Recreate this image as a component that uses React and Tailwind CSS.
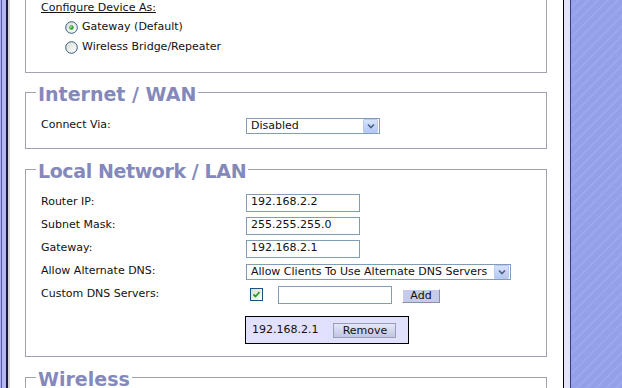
import React from 'react';

function Radio({ checked }) {
  return (
    <svg width="13" height="13" viewBox="0 0 13 13" className="shrink-0">
      <defs>
        <linearGradient id={checked ? 'rg1' : 'rg0'} x1="0" y1="0" x2="1" y2="1">
          <stop offset="0" stopColor="#dcdcd4" />
          <stop offset="1" stopColor="#ffffff" />
        </linearGradient>
      </defs>
      <circle cx="6.5" cy="6.5" r="5.8" fill={`url(#${checked ? 'rg1' : 'rg0'})`} stroke="#2f5a86" strokeWidth="1" />
      {checked && <circle cx="6.5" cy="6.5" r="2.2" fill="#2fa32f" />}
      {checked && <circle cx="6" cy="6" r="0.9" fill="#9ee89e" />}
    </svg>
  );
}

function Checkbox() {
  return (
    <div className="flex h-[13px] w-[13px] shrink-0 items-center justify-center border border-[#1c5180] bg-gradient-to-br from-[#dcdcd7] to-white">
      <svg width="9" height="9" viewBox="0 0 9 9">
        <path d="M1.5 4.5 L3.5 6.5 L7.5 2" fill="none" stroke="#21a121" strokeWidth="1.8" />
      </svg>
    </div>
  );
}

function Select({ value, width }) {
  return (
    <div className={`flex h-[16px] items-center border border-[#7f9db9] bg-white pl-[4px] pr-px ${width}`}>
      <span className="leading-[14px]">{value}</span>
      <div className="ml-auto flex h-[14px] w-[15px] items-center justify-center rounded-[1px] border border-[#b9cbf3] bg-gradient-to-b from-[#d6e3fd] to-[#b4c8f6]">
        <svg width="8" height="6" viewBox="0 0 8 6">
          <path d="M1 1.5 L4 4.5 L7 1.5" fill="none" stroke="#4d6185" strokeWidth="1.6" />
        </svg>
      </div>
    </div>
  );
}

function TextInput({ value, width = 'w-[114px]' }) {
  return (
    <div className={`flex h-[18px] items-center border border-[#7f9db9] bg-white px-[4px] ${width}`}>
      {value}
    </div>
  );
}

function Row({ label, children }) {
  return (
    <div className="flex h-[23px] items-center">
      <div className="w-[205px] shrink-0">{label}</div>
      {children}
    </div>
  );
}

function Section({ title, className = '', legendClass = '', children }) {
  return (
    <fieldset className={`border border-[#a2a2b2] px-[15px] ${className}`}>
      <legend className={`-ml-[5px] px-[2px] pt-[3px] text-[19px] font-bold leading-[22px] text-[#8489bb] ${legendClass}`}>
        {title}
      </legend>
      {children}
    </fieldset>
  );
}

export default function App() {
  return (
    <div className="flex h-[388px] w-[622px] overflow-hidden bg-white font-['DejaVu_Sans',sans-serif] text-[11px] text-[#111]">
      <div className="flex shrink-0">
        <div className="w-px bg-[#a9b0ef]" />
        <div className="w-px bg-[#5a5aa8]" />
        <div className="w-[4px] bg-[#b4b8ee]" />
        <div className="w-[2px] bg-[#1a1a40]" />
        <div className="w-[2px] bg-[#d6d6d6]" />
      </div>

      <div className="flex w-[553px] shrink-0 flex-col pl-[15px] pr-[16px]">
        <div className="-mt-[20px] border border-[#a2a2b2] px-[15px] pt-[20px] pb-[14px]">
          <div className="h-[14px] leading-[14px] underline">Configure Device As:</div>
          <div className="mt-[2px] ml-[24px] flex h-[20px] items-center gap-[4px]">
            <Radio checked />
            <span>Gateway (Default)</span>
          </div>
          <div className="ml-[24px] flex h-[21px] items-center gap-[4px]">
            <Radio />
            <span>Wireless Bridge/Repeater</span>
          </div>
        </div>

        <Section title="Internet / WAN" className="mt-[7px] pt-[9px] pb-[11px]">
          <Row label="Connect Via:">
            <Select value="Disabled" width="w-[134px]" />
          </Row>
        </Section>

        <Section title="Local Network / LAN" legendClass="tracking-[-0.4px]" className="mt-[8px] pt-[9px] pb-[12px]">
          <Row label="Router IP:">
            <TextInput value="192.168.2.2" />
          </Row>
          <Row label="Subnet Mask:">
            <TextInput value="255.255.255.0" />
          </Row>
          <Row label="Gateway:">
            <TextInput value="192.168.2.1" />
          </Row>
          <Row label="Allow Alternate DNS:">
            <Select value="Allow Clients To Use Alternate DNS Servers" width="w-[265px]" />
          </Row>
          <Row label="Custom DNS Servers:">
            <div className="ml-[4px] flex items-center">
              <Checkbox />
              <div className="ml-[15px]">
                <TextInput value="" />
              </div>
              <button className="mt-[2px] ml-[10px] h-[14px] w-[38px] border-t border-r border-b border-l border-t-white border-r-[#8a8ea8] border-b-[#8a8ea8] border-l-white bg-[#c6cbea] text-[11px] leading-[12px]">
                Add
              </button>
            </div>
          </Row>
          <div className="mt-[10px] ml-[204px] flex h-[28px] w-[164px] items-center border border-black bg-[#e1e1fd] pl-[6px]">
            <span>192.168.2.1</span>
            <button className="ml-[15px] h-[15px] w-[63px] border border-[#9a9eb8] bg-gradient-to-b from-[#e4e7f6] to-[#c1c6e2] text-[11px] leading-[13px]">
              Remove
            </button>
          </div>
        </Section>

        <Section title="Wireless" className="mt-[8px] h-[60px]" />
      </div>

      <div className="w-px shrink-0 bg-black" />
      <div className="w-[6px] shrink-0 bg-[#e3e4fa]" />
      <div className="w-px shrink-0 bg-[#3a3a80]" />
      <div className="flex-1 bg-[#94a0ea] bg-[repeating-linear-gradient(135deg,#94a0ea_0px,#94a0ea_4px,#9eaaf0_5px,#94a0ea_7px)]" />
    </div>
  );
}
